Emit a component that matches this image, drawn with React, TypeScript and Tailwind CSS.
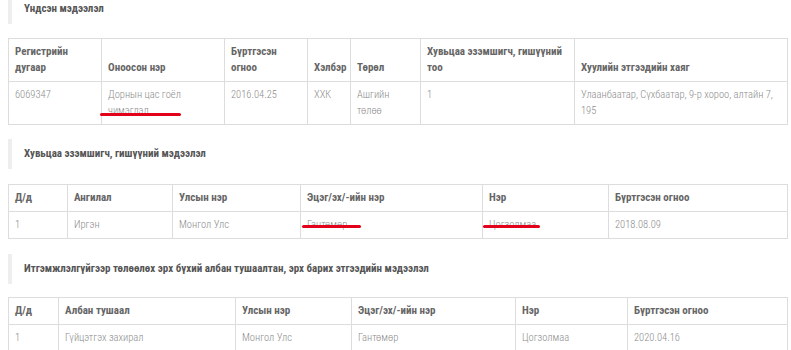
import type { ReactNode } from "react";

type Col = { label: ReactNode; w: string };

function SectionTitle({ children, className = "" }: { children: ReactNode; className?: string }) {
  return (
    <div
      className={`h-[30px] border-l-4 border-[#eeeeee] pl-3 flex items-center font-['Roboto_Condensed',Roboto,sans-serif] text-[11px] font-bold text-[#555555] ${className}`}
    >
      {children}
    </div>
  );
}

function InfoTable({ cols, rows }: { cols: Col[]; rows: ReactNode[][] }) {
  return (
    <table className="w-[779px] table-fixed border-collapse">
      <colgroup>
        {cols.map((c, i) => (
          <col key={i} className={c.w} />
        ))}
      </colgroup>
      <thead>
        <tr>
          {cols.map((c, i) => (
            <th
              key={i}
              className="border border-[#dddddd] px-[6px] py-[5px] text-left align-bottom font-['Roboto_Condensed',Roboto,sans-serif] text-[11px] leading-4 font-bold text-[#666666]"
            >
              {c.label}
            </th>
          ))}
        </tr>
      </thead>
      <tbody>
        {rows.map((r, ri) => (
          <tr key={ri}>
            {r.map((cell, ci) => (
              <td
                key={ci}
                className="border border-[#dddddd] px-[6px] py-[5px] align-top font-['Roboto_Condensed',Roboto,sans-serif] text-[10.5px] leading-4 font-light text-[#8c8c8c]"
              >
                {cell}
              </td>
            ))}
          </tr>
        ))}
      </tbody>
    </table>
  );
}

export default function App() {
  return (
    <div className="relative w-[791px] h-[350px] overflow-hidden bg-white pl-2">
      <div className="-mt-[6px]">
        <SectionTitle>Үндсэн мэдээлэл</SectionTitle>
        <div className="mt-[14px]">
          <InfoTable
            cols={[
              { label: "Регистрийн дугаар", w: "w-[93px]" },
              { label: "Оноосон нэр", w: "w-[123px]" },
              { label: "Бүртгэсэн огноо", w: "w-[83px]" },
              { label: "Хэлбэр", w: "w-[43px]" },
              { label: "Төрөл", w: "w-[70px]" },
              { label: "Хувьцаа эзэмшигч, гишүүний тоо", w: "w-[154px]" },
              { label: "Хуулийн этгээдийн хаяг", w: "w-[213px]" },
            ]}
            rows={[
              [
                "6069347",
                "Дорнын цас гоёл чимэглэл",
                "2016.04.25",
                "ХХК",
                "Ашгийн төлөө",
                "1",
                "Улаанбаатар, Сүхбаатар, 9-р хороо, алтайн 7, 195",
              ],
            ]}
          />
        </div>

        <SectionTitle className="mt-[14px]">Хувьцаа эзэмшигч, гишүүний мэдээлэл</SectionTitle>
        <div className="mt-[15px]">
          <InfoTable
            cols={[
              { label: "Д/д", w: "w-[59px]" },
              { label: "Ангилал", w: "w-[105px]" },
              { label: "Улсын нэр", w: "w-[128px]" },
              { label: "Эцэг/эх/-ийн нэр", w: "w-[182px]" },
              { label: "Нэр", w: "w-[126px]" },
              { label: "Бүртгэсэн огноо", w: "w-[179px]" },
            ]}
            rows={[["1", "Иргэн", "Монгол Улс", "Гантөмөр", "Цогзолмаа", "2018.08.09"]]}
          />
        </div>

        <SectionTitle className="mt-[15px]">
          Итгэмжлэлгүйгээр төлөөлөх эрх бүхий албан тушаалтан, эрх барих этгээдийн мэдээлэл
        </SectionTitle>
        <div className="mt-[13px]">
          <InfoTable
            cols={[
              { label: "Д/д", w: "w-[50px]" },
              { label: "Албан тушаал", w: "w-[177px]" },
              { label: "Улсын нэр", w: "w-[116px]" },
              { label: "Эцэг/эх/-ийн нэр", w: "w-[164px]" },
              { label: "Нэр", w: "w-[112px]" },
              { label: "Бүртгэсэн огноо", w: "w-[160px]" },
            ]}
            rows={[["1", "Гүйцэтгэх захирал", "Монгол Улс", "Гантөмөр", "Цогзолмаа", "2020.04.16"]]}
          />
        </div>
      </div>

      {/* red marker underlines */}
      <span className="absolute left-[100px] top-[113px] h-[3px] w-[81px] rounded-full bg-[#e3001b]" />
      <span className="absolute left-[302px] top-[225px] h-[3px] w-[59px] rounded-full bg-[#e3001b]" />
      <span className="absolute left-[483px] top-[225px] h-[3px] w-[57px] rounded-full bg-[#e3001b]" />
    </div>
  );
}
